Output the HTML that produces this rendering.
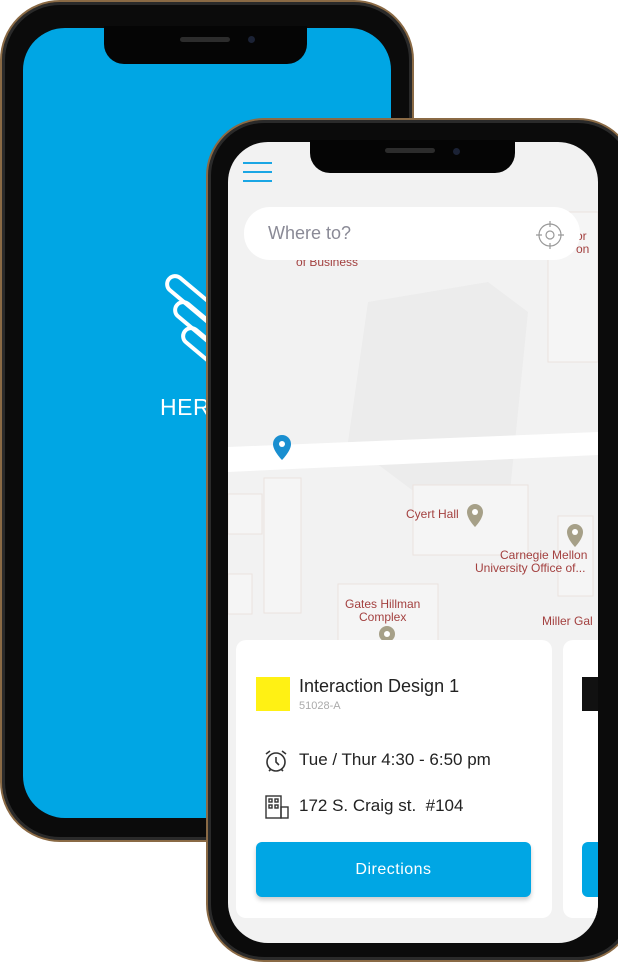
<!DOCTYPE html>
<html><head><meta charset="utf-8"><style>
*{margin:0;padding:0;box-sizing:border-box}
body{width:618px;height:968px;background:#fff;position:relative;overflow:hidden;font-family:"Liberation Sans",sans-serif}
.ph{position:absolute;background:#0b0b0b;border:2px solid #8a6a45;box-shadow:inset 0 0 0 3px #2a2a2a}
.scr{position:absolute;overflow:hidden}
.notch{position:absolute;background:#050505;border-radius:0 0 20px 20px}
.spk{position:absolute;height:5px;width:50px;border-radius:3px;background:#2c2c2c}
.cam{position:absolute;width:7px;height:7px;border-radius:50%;background:#1b2235}
.lbl{position:absolute;color:#a3403f;font-size:12px;line-height:13px}
</style></head><body>

<!-- Left phone -->
<div class="ph" style="left:0;top:0;width:414px;height:842px;border-radius:60px"></div>
<div class="scr" style="left:23px;top:28px;width:368px;height:790px;border-radius:42px;background:#00a6e4">
  <svg style="position:absolute;left:140px;top:235px" width="100" height="120" viewBox="0 0 100 120">
    <g fill="none" stroke="#fff" stroke-width="4">
      <rect x="6" y="8" width="80" height="16" rx="8" transform="rotate(40 6 16)"/>
      <rect x="14" y="34" width="80" height="16" rx="8" transform="rotate(40 14 42)"/>
      <rect x="22" y="60" width="80" height="16" rx="8" transform="rotate(40 22 68)"/>
    </g>
  </svg>
  <div style="position:absolute;left:137px;top:366px;color:#fff;font-size:23px;letter-spacing:0.5px">HERMES</div>
</div>
<div class="notch" style="left:104px;top:26px;width:203px;height:38px"></div>
<div class="spk" style="left:180px;top:37px"></div>
<div class="cam" style="left:248px;top:36px"></div>

<!-- Right phone -->
<div class="ph" style="left:206px;top:118px;width:430px;height:844px;border-radius:58px"></div>
<div class="scr" style="left:228px;top:142px;width:370px;height:801px;border-radius:40px;background:#f2f2f2">
  <svg style="position:absolute;left:0;top:0" width="370" height="801">
    <path d="M140 160 L260 140 L300 170 L280 370 L200 360 L120 300 Z" fill="#ececec"/>
    <path d="M0 305 L370 290 L370 313 L0 330 Z" fill="#fff"/>
    <g fill="#f5f5f5" stroke="#ebe2de" stroke-width="1">
      <rect x="36" y="336" width="37" height="135"/>
      <rect x="0" y="352" width="34" height="40"/>
      <rect x="0" y="432" width="24" height="40"/>
      <rect x="185" y="343" width="115" height="70"/>
      <rect x="330" y="374" width="35" height="80"/>
      <rect x="110" y="442" width="100" height="60"/>
      <rect x="320" y="70" width="50" height="150"/>
    </g>
    <path d="M45 302 a9 9 0 0 1 18 0 c0 7 -9 16 -9 16 c0 0 -9 -9 -9 -16z" fill="#1a8fd0"/>
    <circle cx="54" cy="302" r="3" fill="#fff"/>
    <path d="M239 370 a8 8 0 0 1 16 0 c0 7 -8 15 -8 15 c0 0 -8 -8 -8 -15z" fill="#a6a088"/>
    <circle cx="247" cy="370" r="3" fill="#fff"/>
    <path d="M339 390 a8 8 0 0 1 16 0 c0 7 -8 15 -8 15 c0 0 -8 -8 -8 -15z" fill="#a6a088"/>
    <circle cx="347" cy="390" r="3" fill="#fff"/>
    <circle cx="159" cy="492" r="8" fill="#a6a088"/><circle cx="159" cy="492" r="3" fill="#fff"/>
  </svg>
  <div class="lbl" style="left:68px;top:114px">of Business</div>
  <div class="lbl" style="left:348px;top:88px">or<br>on</div>
  <div class="lbl" style="left:178px;top:366px">Cyert Hall</div>
  <div class="lbl" style="left:272px;top:407px">Carnegie Mellon</div>
  <div class="lbl" style="left:247px;top:420px">University Office of...</div>
  <div class="lbl" style="left:117px;top:456px">Gates Hillman</div>
  <div class="lbl" style="left:131px;top:469px">Complex</div>
  <div class="lbl" style="left:314px;top:473px">Miller Gal</div>

  <div style="position:absolute;left:15px;top:20px;width:29px">
    <div style="height:2px;background:#1aa6e4;margin-bottom:7px"></div>
    <div style="height:2px;background:#1aa6e4;margin-bottom:7px"></div>
    <div style="height:2px;background:#1aa6e4"></div>
  </div>
  <div style="position:absolute;left:16px;top:65px;width:336px;height:53px;border-radius:26px;background:#fff">
    <div style="position:absolute;left:24px;top:16px;font-size:18px;color:#8a8a96">Where to?</div>
    <svg style="position:absolute;left:290px;top:12px" width="32" height="32" viewBox="0 0 32 32" fill="none" stroke="#999" stroke-width="1.2">
      <circle cx="16" cy="16" r="11"/><circle cx="16" cy="16" r="4"/>
      <path d="M16 2v6M16 24v6M2 16h6M24 16h6"/>
    </svg>
  </div>

  <div style="position:absolute;left:8px;top:498px;width:316px;height:278px;background:#fff;border-radius:10px">
    <div style="position:absolute;left:20px;top:37px;width:34px;height:34px;background:#fff114"></div>
    <div style="position:absolute;left:63px;top:36px;font-size:18px;color:#222">Interaction Design 1</div>
    <div style="position:absolute;left:63px;top:60px;font-size:11px;color:#aaa">51028-A</div>
    <svg style="position:absolute;left:27px;top:108px" width="26" height="26" viewBox="0 0 26 26" fill="none" stroke="#333" stroke-width="1.6">
      <circle cx="13" cy="14" r="9"/><path d="M13 9v5l3 3M3 6l4-3M23 6l-4-3M6 23l2-2M20 23l-2-2"/>
    </svg>
    <div style="position:absolute;left:63px;top:110px;font-size:17px;color:#222">Tue / Thur 4:30 - 6:50 pm</div>
    <svg style="position:absolute;left:29px;top:155px" width="26" height="24" viewBox="0 0 26 24" fill="none" stroke="#333" stroke-width="1.4">
      <rect x="1" y="1" width="15" height="22"/><rect x="16" y="12" width="7" height="11"/>
      <rect x="4" y="4" width="3" height="3"/><rect x="10" y="4" width="3" height="3"/><rect x="4" y="10" width="3" height="3"/><rect x="10" y="10" width="3" height="3"/>
    </svg>
    <div style="position:absolute;left:63px;top:156px;font-size:17px;color:#222">172 S. Craig st. &nbsp;#104</div>
    <div style="position:absolute;left:20px;top:202px;width:275px;height:55px;background:#00a6e4;border-radius:6px;box-shadow:0 3px 5px rgba(0,0,0,.2);color:#fff;font-size:16px;text-align:center;line-height:55px;letter-spacing:.5px">Directions</div>
  </div>
  <div style="position:absolute;left:335px;top:498px;width:60px;height:278px;background:#fff;border-radius:10px">
    <div style="position:absolute;left:19px;top:37px;width:30px;height:34px;background:#111"></div>
    <div style="position:absolute;left:19px;top:202px;width:40px;height:55px;background:#00a6e4;border-radius:6px"></div>
  </div>
</div>
<div class="notch" style="left:310px;top:140px;width:205px;height:33px"></div>
<div class="spk" style="left:385px;top:148px"></div>
<div class="cam" style="left:453px;top:148px"></div>
</body></html>
